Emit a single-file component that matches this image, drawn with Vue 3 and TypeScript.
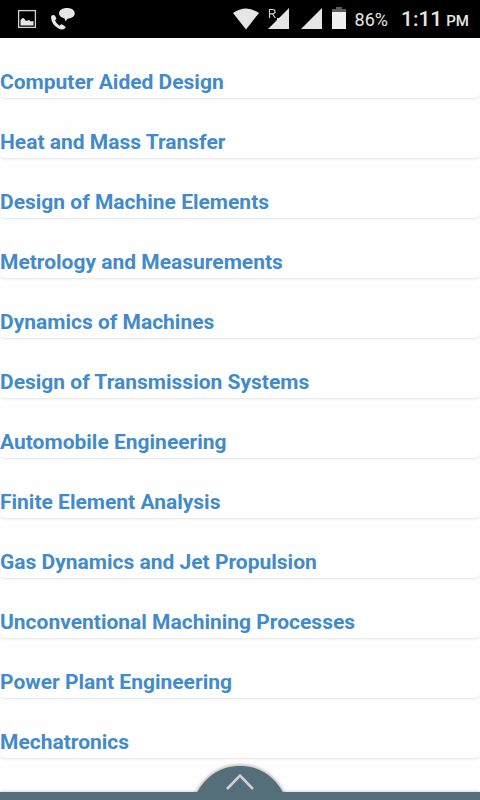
<script setup lang="ts">
import { ref } from 'vue'

const subjects: string[] = [
  'Computer Aided Design',
  'Heat and Mass Transfer',
  'Design of Machine Elements',
  'Metrology and Measurements',
  'Dynamics of Machines',
  'Design of Transmission Systems',
  'Automobile Engineering',
  'Finite Element Analysis',
  'Gas Dynamics and Jet Propulsion',
  'Unconventional Machining Processes',
  'Power Plant Engineering',
  'Mechatronics',
]

const battery = ref('86%')
const time = ref('1:11')
</script>

<template>
  <div class="screen">
    <header class="status">
      <div class="notices">
        <svg width="20" height="20" viewBox="0 0 20 20" aria-hidden="true">
          <rect x="1.6" y="1.6" width="16.8" height="16.8" fill="none" stroke="#d4d4d4" stroke-width="1.3" />
          <path d="M3.5 16.5V11L5 9.500Q6.200 8.500 7.500 10L9 12L12 11L14 12.500L16.500 12V16.500Z" fill="#e6e6e6" />
        </svg>
        <svg width="26" height="24" viewBox="0 0 26 24" aria-hidden="true">
          <path d="M17 1C12.500 1 9 3.200 9 6.300C9 8.600 11 10.700 14.500 11.400L15.500 14.200L18 11.600C22 11.400 24.800 9.200 24.800 6.300C24.800 3.200 21.500 1 17 1Z" fill="#e6e6e6" />
          <path d="M2.200 8.300Q4 7.300 5.200 9L6.300 11.300Q6.600 12.200 5 13.300Q6 16.300 9.500 18.800Q11.200 17 12.200 17.400L15.200 19.400Q16.300 20.500 14.800 21.600Q12 23.600 8 21.300Q1.500 17.300 1 10.300Q1 9 2.200 8.300Z" fill="#e6e6e6" />
        </svg>
      </div>
      <div class="system">
        <svg width="28" height="22" viewBox="0 0 28 22" aria-hidden="true">
          <path d="M1 5Q14 -4 27 5L14 21.500Z" fill="#e6e6e6" />
        </svg>
        <svg class="roaming" width="22" height="22" viewBox="0 0 22 22" aria-hidden="true">
          <path d="M21 0V21H0L9 12V10H11Z" fill="#e6e6e6" />
          <path d="M1.500 10V1.500H4.500Q7 1.500 7 3.700Q7 5.800 4.500 5.800H1.500M4.500 5.800L7.300 10" fill="none" stroke="#cfcfcf" stroke-width="1.200" />
        </svg>
        <svg class="signal" width="22" height="22" viewBox="0 0 22 22" aria-hidden="true">
          <path d="M21 0V21H0Z" fill="#e6e6e6" />
        </svg>
        <svg class="cell" width="14" height="22" viewBox="0 0 14 22" aria-hidden="true">
          <path d="M0 2H4V0H10V2H14V5H0Z" fill="#5c5c5c" />
          <path d="M0 5H14V22H0Z" fill="#f0f0f0" />
        </svg>
        <span class="percent">{{ battery }}</span>
        <span class="clock">{{ time }}<small>PM</small></span>
      </div>
    </header>

    <main class="list">
      <article v-for="subject in subjects" :key="subject" class="card">
        <a href="#">{{ subject }}</a>
      </article>
    </main>

    <footer class="drawer">
      <button class="handle" type="button" aria-label="Open menu">
        <svg class="dome" width="120" height="32" viewBox="0 0 120 32" aria-hidden="true">
          <path class="dome-fill" d="M15.500 36L17.500 32C26 16 41 6 60 6S94 16 102.500 32L104.500 36Z" />
          <path d="M47 29L60 15.500L73 29" fill="none" stroke="#d0d0d0" stroke-width="2.600" />
        </svg>
      </button>
      <div class="bar"></div>
    </footer>
  </div>
</template>

<style>
body {
  background: #fefefe;
}
</style>

<style scoped>
.screen {
  min-height: 100vh;
  overflow: hidden;
  font-family: Roboto, "Liberation Sans", sans-serif;
}

.status {
  display: flex;
  justify-content: space-between;
  align-items: center;
  box-sizing: border-box;
  height: 38px;
  padding: 0 11px 0 17px;
  background: #000;
  color: #e6e6e6;
}

.notices,
.system {
  display: flex;
  align-items: center;
}

.notices {
  gap: 13px;
}

.roaming {
  margin-left: 8px;
}

.signal {
  margin-left: 11px;
}

.cell {
  margin-bottom: 2px;
  margin-left: 9px;
}

.percent {
  margin-left: 9px;
  padding-top: 2px;
  font-size: 18px;
  line-height: 24px;
}

.clock {
  margin-left: 13px;
  padding-top: 2px;
  font-size: 21px;
  font-weight: 500;
  line-height: 24px;
}

.clock small {
  margin-left: 4px;
  font-size: 15px;
}

.list {
  display: flex;
  flex-direction: column;
  gap: 29px;
  padding: 29px 0 41px;
}

.card {
  border-radius: 5px;
  background: #fff;
  box-shadow: 0 1px 1px rgba(0, 0, 0, 0.05), 0 2px 3px rgba(0, 0, 0, 0.04);
}

.card a {
  display: block;
  color: #428bca;
  font-size: 21px;
  font-weight: 700;
  line-height: 31px;
  text-decoration: none;
}

.drawer {
  position: fixed;
  right: 0;
  bottom: 0;
  left: 0;
  display: flex;
  flex-direction: column;
  align-items: center;
}

.handle {
  z-index: 1;
  display: block;
  margin: 0;
  padding: 0;
  border: 0;
  background: none;
}

.dome {
  display: block;
}

.dome-fill {
  fill: #546e7a;
  filter: drop-shadow(0 0 2px rgba(0, 0, 0, 0.5));
}

.bar {
  align-self: stretch;
  height: 8px;
  background: #546e7a;
  box-shadow: 0 0 3px rgba(0, 0, 0, 0.3);
}
</style>
